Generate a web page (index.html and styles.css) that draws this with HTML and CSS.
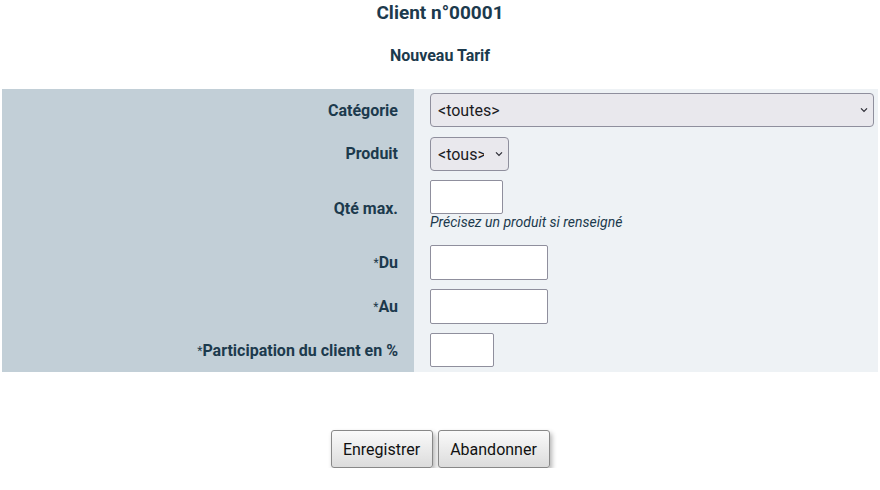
FILE: index.html
```html
<!DOCTYPE html>
<html lang="fr">
<head>
<meta charset="utf-8">
<title>Nouveau Tarif</title>
<link rel="stylesheet" href="styles.css">
</head>
<body>
<div class="page">
  <h1 class="title">Client n°00001</h1>
  <h2 class="subtitle">Nouveau Tarif</h2>
  <form class="form">
    <table class="grid">
      <tr>
        <th class="label">Catégorie</th>
        <td class="field">
          <span class="sel sel-wide">
            <select><option>&lt;toutes&gt;</option></select>
            <svg class="chev" width="10" height="6" viewBox="0 0 10 6"><path d="M2 1.4 L5 4.4 L8 1.4" fill="none" stroke="#2b2b33" stroke-width="1.2"/></svg>
          </span>
        </td>
      </tr>
      <tr>
        <th class="label">Produit</th>
        <td class="field">
          <span class="sel sel-small">
            <select><option>&lt;tous&gt;</option></select>
            <svg class="chev" width="10" height="6" viewBox="0 0 10 6"><path d="M2 1.4 L5 4.4 L8 1.4" fill="none" stroke="#2b2b33" stroke-width="1.2"/></svg>
          </span>
        </td>
      </tr>
      <tr>
        <th class="label">Qté max.</th>
        <td class="field">
          <input class="inp inp-qte" type="text">
          <div class="note">Précisez un produit si renseigné</div>
        </td>
      </tr>
      <tr>
        <th class="label"><span class="req">*</span>Du</th>
        <td class="field"><input class="inp inp-date" type="text"></td>
      </tr>
      <tr>
        <th class="label"><span class="req">*</span>Au</th>
        <td class="field"><input class="inp inp-date" type="text"></td>
      </tr>
      <tr>
        <th class="label"><span class="req">*</span>Participation du client en %</th>
        <td class="field"><input class="inp inp-pct" type="text"></td>
      </tr>
    </table>
    <div class="actions">
      <button type="button" class="btn btn-save">Enregistrer</button>
      <button type="button" class="btn btn-cancel">Abandonner</button>
    </div>
  </form>
</div>
</body>
</html>
```
FILE: styles.css
```css
html, body {
  margin: 0;
  padding: 0;
  background: #ffffff;
}
body {
  font-family: Roboto, "Liberation Sans", sans-serif;
  color: #1c3a4d;
}
.page {
  padding: 0 2px;
}
.title {
  margin: 0;
  padding-top: 2px;
  font-size: 19px;
  line-height: 22px;
  font-weight: 700;
  text-align: center;
}
.subtitle {
  margin: 21px 0 0;
  font-size: 16px;
  line-height: 22px;
  font-weight: 700;
  text-align: center;
}
.form {
  margin: 0;
}
.grid {
  margin-top: 22px;
  width: 876px;
  border-collapse: collapse;
  border-spacing: 0;
}
.label {
  width: 380px;
  background: #c2cfd7;
  text-align: right;
  vertical-align: middle;
  font-size: 16px;
  font-weight: 700;
  padding: 4px 16px 5px;
  white-space: nowrap;
}
.req {
  font-size: 12px;
  font-weight: 400;
  vertical-align: 1px;
}
.field {
  background: #eef2f5;
  padding: 4px 4px 5px 16px;
  vertical-align: middle;
}
.sel {
  position: relative;
  display: inline-block;
  vertical-align: top;
}
.sel-small {
  margin-top: 1px;
}
.sel select {
  -webkit-appearance: none;
  appearance: none;
  display: block;
  box-sizing: border-box;
  height: 34px;
  margin: 0;
  padding: 0 24px 0 7px;
  font-family: Roboto, "Liberation Sans", sans-serif;
  font-size: 16px;
  color: #1b1b1f;
  background: #e9e8ed;
  border: 1px solid #8f8f9d;
  border-radius: 4px;
}
.sel-wide select {
  width: 444px;
}
.sel-small select {
  width: 79px;
}
.chev {
  position: absolute;
  right: 5px;
  top: 14px;
}
.inp {
  display: block;
  box-sizing: border-box;
  height: 34px;
  margin: 0;
  padding: 2px 4px;
  font-family: Roboto, "Liberation Sans", sans-serif;
  font-size: 16px;
  background: #ffffff;
  border: 1px solid #8f8f9d;
  border-radius: 2px;
}
.inp-qte {
  width: 73px;
}
.inp-date {
  width: 118px;
  height: 35px;
}
.inp-pct {
  width: 64px;
}
.note {
  font-size: 14px;
  font-style: italic;
  line-height: 16px;
  margin-bottom: 6px;
  color: #1c3a4d;
}
.actions {
  display: flex;
  justify-content: center;
  gap: 5px;
  margin-top: 58px;
}
.btn {
  box-sizing: border-box;
  height: 38px;
  padding: 0 11px;
  font-family: Roboto, "Liberation Sans", sans-serif;
  font-size: 16px;
  color: #111111;
  background: linear-gradient(#fafafa, #dcdcdc);
  border: 1px solid #888888;
  border-radius: 3px;
  box-shadow: 2px 3px 5px rgba(0, 0, 0, 0.3);
}
.btn-save {
  width: 102px;
}
.btn-cancel {
  width: 112px;
}
```
